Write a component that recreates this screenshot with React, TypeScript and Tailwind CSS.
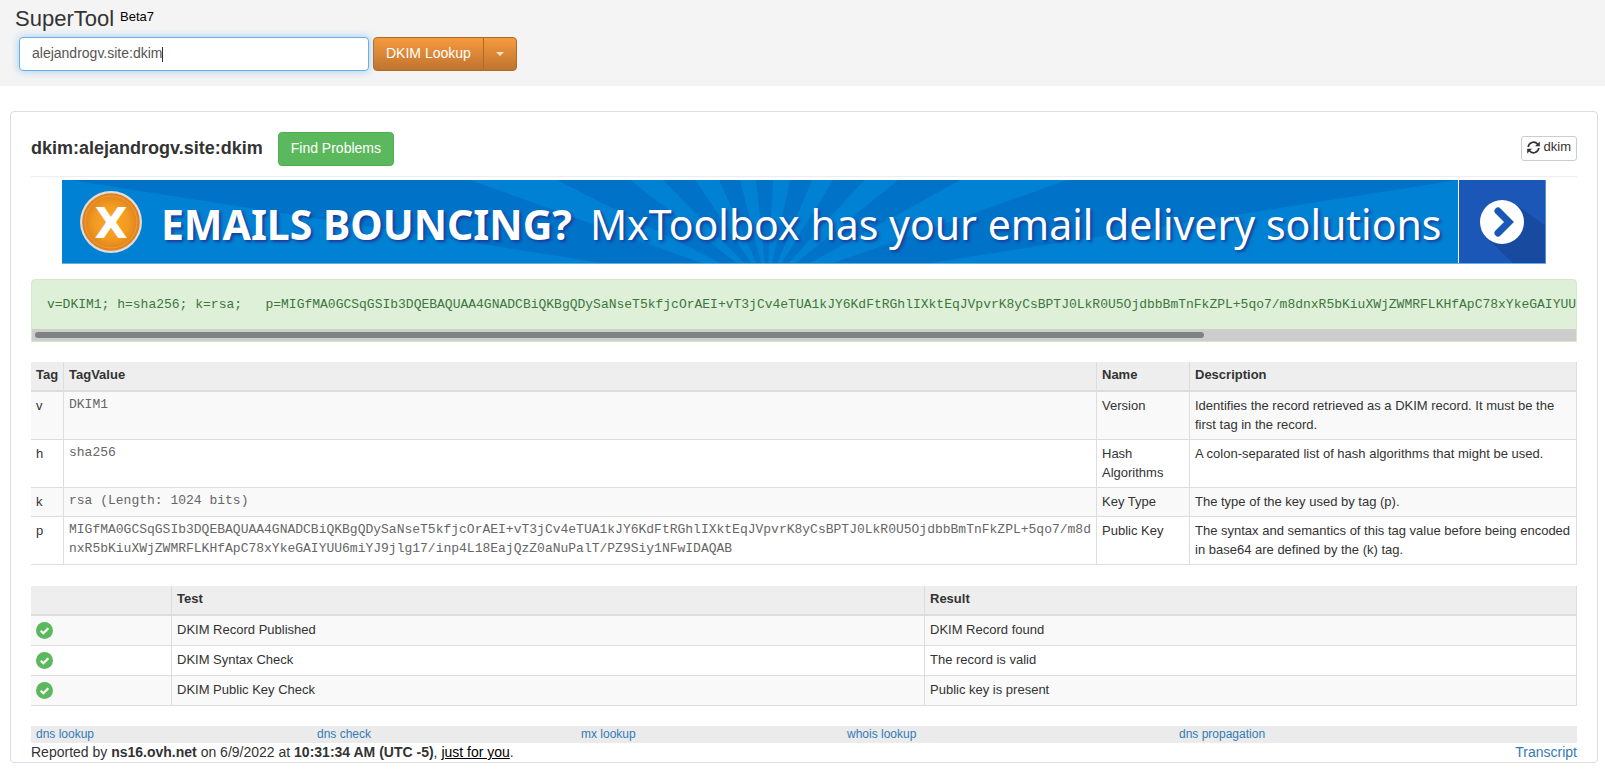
import type { ReactNode } from "react";

const RECORD_KEY =
  "MIGfMA0GCSqGSIb3DQEBAQUAA4GNADCBiQKBgQDySaNseT5kfjcOrAEI+vT3jCv4eTUA1kJY6KdFtRGhlIXktEqJVpvrK8yCsBPTJ0LkR0U5OjdbbBmTnFkZPL+5qo7/m8dnxR5bKiuXWjZWMRFLKHfApC78xYkeGAIYUU6miYJ9jlg17/inp4L18EajQzZ0aNuPalT/PZ9Siy1NFwIDAQAB";

const TAGS = [
  {
    tag: "v",
    value: "DKIM1",
    name: "Version",
    description: "Identifies the record retrieved as a DKIM record. It must be the first tag in the record.",
  },
  {
    tag: "h",
    value: "sha256",
    name: "Hash Algorithms",
    description: "A colon-separated list of hash algorithms that might be used.",
  },
  {
    tag: "k",
    value: "rsa (Length: 1024 bits)",
    name: "Key Type",
    description: "The type of the key used by tag (p).",
  },
  {
    tag: "p",
    value: RECORD_KEY,
    name: "Public Key",
    description: "The syntax and semantics of this tag value before being encoded in base64 are defined by the (k) tag.",
  },
];

const TESTS = [
  { test: "DKIM Record Published", result: "DKIM Record found" },
  { test: "DKIM Syntax Check", result: "The record is valid" },
  { test: "DKIM Public Key Check", result: "Public key is present" },
];

const LINKS = ["dns lookup", "dns check", "mx lookup", "whois lookup", "dns propagation"];

function RefreshIcon() {
  return (
    <svg viewBox="0 0 13 13" className="size-[13px]" aria-hidden="true">
      <g fill="none" stroke="currentColor" strokeWidth="1.700">
        <path d="M1.200 6A5.300 5.300 0 0 1 10.600 3.200" />
        <path d="M11.800 7A5.300 5.300 0 0 1 2.400 9.800" />
      </g>
      <g fill="currentColor">
        <path d="M12.800 0.400V5.200H8z" />
        <path d="M0.200 12.600V7.800H5z" />
      </g>
    </svg>
  );
}

function CheckIcon() {
  return (
    <svg viewBox="0 0 18 18" className="block size-[17px]" role="img" aria-label="Passed">
      <circle cx="9" cy="9" r="9" fill="#5cb85c" />
      <path d="M5 9.300 7.800 11.900 13 6.600" fill="none" stroke="#fff" strokeWidth="2.400" />
    </svg>
  );
}

function Banner() {
  const rays = ["408,0 495,0", "568,0 601,0", "633,0 657,0", "678,0 694,0", "711,0 728,0", "750,0 771,0", "802,0 836,0", "898,0 1005,0"];
  return (
    <a href="#solutions" className="mx-[2%] mt-[3px] flex h-[84px] overflow-hidden border-b border-[#62b0e4] text-white">
      <span className="relative flex min-w-0 flex-1 items-center border-r border-white">
        <svg
          viewBox="0 0 1396 84"
          preserveAspectRatio="none"
          className="absolute inset-0 size-full"
          aria-hidden="true"
        >
          <rect width="1396" height="84" fill="#0072c8" />
          <g fill="#0081d3">
            <polygon points="0,0 8,0 705,110 705,84 0,84" />
            <polygon points="1396,0 705,110 705,84 1396,84" />
            {rays.map((r) => (
              <polygon key={r} points={`${r} 705,108`} />
            ))}
          </g>
        </svg>
        <svg viewBox="0 0 64 64" className="relative ml-[17px] size-16 shrink-0" aria-hidden="true">
          <defs>
            <radialGradient id="badge">
              <stop offset="0" stopColor="#f9a825" />
              <stop offset="0.600" stopColor="#f39a22" />
              <stop offset="1" stopColor="#dd7f1c" />
            </radialGradient>
          </defs>
          <circle cx="32" cy="32" r="31" fill="#e3dcd6" />
          <circle cx="32" cy="32" r="28.800" fill="url(#badge)" />
          <circle cx="32" cy="32" r="26" fill="none" stroke="#f6ad4a" strokeWidth="0.600" />
          <text x="32" y="48" textAnchor="middle" fontFamily="DejaVu Sans" fontWeight="700" fontSize="43" fill="#fff">
            X
          </text>
        </svg>
        <span className="relative ml-[18px] pt-[5px] font-['Noto_Sans',sans-serif] text-[41px] leading-[60px] font-bold whitespace-nowrap [text-shadow:2px_2px_3px_#1b3c96]">
          EMAILS BOUNCING?
        </span>
        <span className="relative ml-[18px] pt-[5px] font-['Noto_Sans',sans-serif] text-[41px] leading-[60px] whitespace-nowrap [text-shadow:2px_2px_3px_#1b3c96]">
          MxToolbox has your email delivery solutions
        </span>
      </span>
      <svg viewBox="0 0 87 84" className="h-[84px] w-[87px] shrink-0" aria-hidden="true">
        <rect width="87" height="84" fill="#1a57b6" />
        <polygon points="28,58 59,26 87,46 87,84 55,84" fill="#184b9f" />
        <circle cx="43" cy="42" r="22" fill="#fff" />
        <path d="M39 31 50 42 39 53" fill="none" stroke="#1a57b6" strokeWidth="7" strokeLinecap="round" />
        <path d="M86.500 0V84" stroke="#5a8bd0" />
      </svg>
    </a>
  );
}

function Th({ children }: { children?: ReactNode }) {
  return (
    <th scope="col" className="border-r border-b-2 border-[#ddd] px-[5px] pt-[3px] pb-[6px] text-left align-top font-bold">
      {children}
    </th>
  );
}

function Td({ children, className = "" }: { children?: ReactNode; className?: string }) {
  return <td className={`border-r border-b border-[#ddd] px-[5px] align-top ${className}`}>{children}</td>;
}

export default function App() {
  return (
    <div className="bg-white font-['Liberation_Sans',Arial,sans-serif] text-sm leading-5 text-[#333]">
      <header className="bg-[#f4f4f4] px-[15px] pt-[7px] pb-[15px]">
        <h1 className="flex items-start gap-[6px] text-[22px] leading-6">
          SuperTool <sup className="top-0 text-[13px] leading-5 text-black">Beta7</sup>
        </h1>
        <form className="mt-[6px] ml-1 flex gap-1" onSubmit={(e) => e.preventDefault()}>
          <div className="relative">
            <input
              type="text"
              aria-label="Lookup"
              defaultValue="alejandrogv.site:dkim"
              className="block h-[34px] w-[350px] rounded border border-[#66afe9] bg-white px-3 pb-[2px] text-sm text-[#555] caret-transparent shadow-[0_0_8px_rgba(102,175,233,0.6)] outline-none"
            />
            <span className="absolute top-[10px] left-[143px] h-[15px] w-px bg-[#333]" aria-hidden="true" />
          </div>
          <div className="flex h-[34px] text-white [text-shadow:0_-1px_0_rgba(0,0,0,0.25)]">
            <button
              type="submit"
              className="rounded-l border border-[#b06a28] bg-linear-to-b from-[#f79a3e] to-[#bf742f] px-3 pb-[2px]"
            >
              DKIM Lookup
            </button>
            <button
              type="button"
              aria-label="More lookups"
              className="-ml-px flex w-[34px] items-center justify-center rounded-r border border-[#b06a28] bg-linear-to-b from-[#f79a3e] to-[#bf742f]"
            >
              <svg viewBox="0 0 8 4" className="h-1 w-2" aria-hidden="true">
                <path d="M0 0h8L4 4z" fill="#fbe6d2" />
              </svg>
            </button>
          </div>
        </form>
      </header>

      <main className="mt-[25px] mr-[7px] ml-[10px] rounded border border-[#ddd] px-5">
        <div className="flex items-center justify-between border-b border-[#eee] pt-5 pb-[10px]">
          <div className="flex items-center gap-[15px]">
            <h2 className="pb-[2px] text-lg leading-5 font-bold">dkim:alejandrogv.site:dkim</h2>
            <button type="button" className="h-[34px] rounded border border-[#4cae4c] bg-[#5cb85c] px-3 pb-[2px] text-white">
              Find Problems
            </button>
          </div>
          <button
            type="button"
            className="mb-[2px] flex h-[25px] items-center gap-1 rounded-[3px] border border-[#ccc] bg-white px-[5px] pb-[2px] text-[13px]"
          >
            <RefreshIcon /> dkim
          </button>
        </div>

        <Banner />

        <div className="mt-[15px] overflow-hidden rounded-t border border-[#d6e9c6] bg-[#dff0d8]">
          <pre className="overflow-x-auto px-[15px] py-[15px] font-['Liberation_Mono',monospace] text-[13px] leading-[19px] text-[#3c763d] [scrollbar-width:none]">
            {`v=DKIM1; h=sha256; k=rsa;   p=${RECORD_KEY}`}
          </pre>
          <div className="bg-[#cdcdcd] px-[3px] py-[3px]">
            <div className="h-[6px] w-[76%] rounded-full bg-[#7e8280]" />
          </div>
        </div>

        <table className="mt-5 w-full table-fixed border-separate border-spacing-0 text-[13px] leading-[19px]">
          <colgroup>
            <col className="w-[33px]" />
            <col />
            <col className="w-[93px]" />
            <col className="w-[387px]" />
          </colgroup>
          <thead>
            <tr className="bg-[#eee]">
              <Th>Tag</Th>
              <Th>TagValue</Th>
              <Th>Name</Th>
              <Th>Description</Th>
            </tr>
          </thead>
          <tbody>
            {TAGS.map((t) => (
              <tr key={t.tag} className="odd:bg-[#f9f9f9]">
                <Td className="pt-1 pb-[5px]">{t.tag}</Td>
                <Td className="pt-[3px] pb-[6px] font-['Liberation_Mono',monospace] break-all text-[#666]">{t.value}</Td>
                <Td className="pt-1 pb-[5px]">{t.name}</Td>
                <Td className="pt-1 pb-[5px]">{t.description}</Td>
              </tr>
            ))}
          </tbody>
        </table>

        <table className="mt-[21px] w-full table-fixed border-separate border-spacing-0 text-[13px] leading-[19px]">
          <colgroup>
            <col className="w-[141px]" />
            <col className="w-[753px]" />
            <col />
          </colgroup>
          <thead>
            <tr className="bg-[#eee]">
              <Th />
              <Th>Test</Th>
              <Th>Result</Th>
            </tr>
          </thead>
          <tbody>
            {TESTS.map((t) => (
              <tr key={t.test} className="odd:bg-[#f9f9f9]">
                <Td className="py-[6px]">
                  <CheckIcon />
                </Td>
                <Td className="pt-1 pb-[6px]">{t.test}</Td>
                <Td className="pt-1 pb-[6px]">{t.result}</Td>
              </tr>
            ))}
          </tbody>
        </table>

        <nav className="mt-5 grid grid-cols-[281fr_264fr_266fr_332fr_403fr] bg-[#ebebeb] text-xs leading-[17px] text-[#337ab7]">
          {LINKS.map((l) => (
            <a key={l} href={`#${l.replace(" ", "-")}`} className="px-[5px]">
              {l}
            </a>
          ))}
        </nav>
        <footer className="flex justify-between leading-[19px]">
          <p>
            Reported by <b>ns16.ovh.net</b> on 6/9/2022 at <b>10:31:34 AM (UTC -5)</b>,{" "}
            <a href="#just-for-you" className="text-black underline">
              just for you
            </a>
            .
          </p>
          <a href="#transcript" className="text-[#337ab7]">
            Transcript
          </a>
        </footer>
      </main>
    </div>
  );
}
